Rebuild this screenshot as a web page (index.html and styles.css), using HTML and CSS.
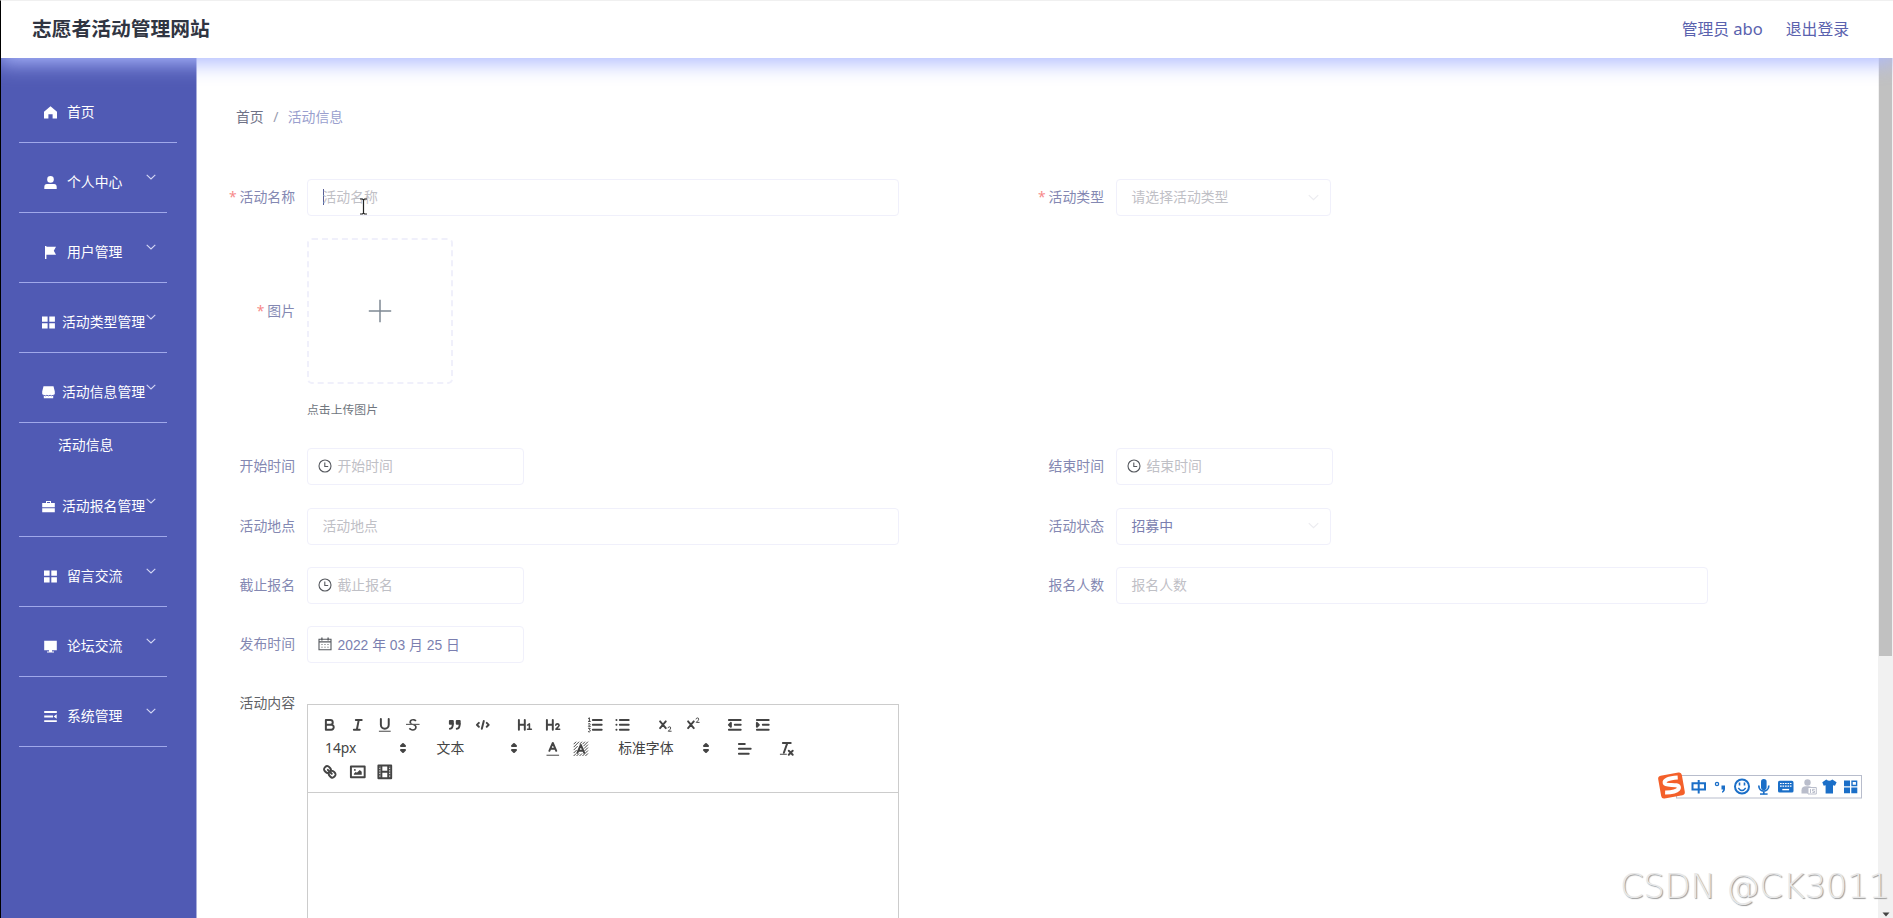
FILE: index.html
```html
<!DOCTYPE html>
<html lang="zh-CN">
<head>
<meta charset="utf-8">
<title>志愿者活动管理网站</title>
<link rel="stylesheet" href="styles.css">
</head>
<body>
<svg class="defs" aria-hidden="true">
  <symbol id="chev" viewBox="0 0 10 6"><path d="M.7.8 5 5 9.300.8" fill="none" stroke="currentColor" stroke-width="1.1"/></symbol>
  <symbol id="grid" viewBox="0 0 13 13"><path d="M0 .5h5.600v5.200H0zM7.300.5h5.600v5.200H7.300zM0 7.300h5.600v5.200H0zM7.300 7.300h5.600v5.200H7.300z" fill="currentColor"/></symbol>
  <symbol id="clock" viewBox="0 0 14 14"><g fill="none" stroke="currentColor" stroke-width="1.1"><circle cx="7" cy="7" r="6"/><path d="M6.800 3.500v4h3.400"/></g></symbol>
  <symbol id="updown" viewBox="0 0 18 18"><path d="M7 11 9 13 11 11ZM7 7 9 5 11 7Z" fill="#444" stroke="#444" stroke-width="2" stroke-linejoin="round"/></symbol>
</svg>
<div class="app">
  <header class="header">
    <h1 class="title">志愿者活动管理网站</h1>
    <div class="user"><span>管理员 <span class="name">abo</span></span><span>退出登录</span></div>
  </header>
  <div class="body">
    <nav class="side">
      <div class="item home"><svg class="mi" viewBox="0 0 13 13"><path d="M6.500.3 13 5.800V12.500H8.600V8.300H4.400v4.200H0V5.800z" fill="currentColor"/></svg><span>首页</span></div>
      <div class="item"><svg class="mi" viewBox="0 0 13 13"><circle cx="6.500" cy="3.400" r="3.300" fill="currentColor"/><path d="M.3 13V11Q.3 8 3 8h7q2.700 0 2.700 3v2z" fill="currentColor"/></svg><span>个人中心</span><svg class="chev"><use href="#chev"/></svg></div>
      <div class="item"><svg class="mi" viewBox="0 0 13 13"><path d="M1 0h1.400v.8H12L9.800 4.800 12 8.800H2.400V13H1z" fill="currentColor"/></svg><span>用户管理</span><svg class="chev"><use href="#chev"/></svg></div>
      <div class="item long"><svg class="mi"><use href="#grid"/></svg><span>活动类型管理</span><svg class="chev"><use href="#chev"/></svg></div>
      <div class="item long"><svg class="mi" viewBox="0 0 13 13"><path d="M1.500.3h10L12.800 5.500v2.300q0 1-1.600 1.200v3.300H1.800V9Q.2 8.800.2 7.800V5.500z" fill="currentColor"/><path d="M1.800 9.300q1.600 1 3.100 0 1.600 1 3.200 0 1.500 1 3.100 0" fill="none" stroke="#505ab4" stroke-width=".9"/></svg><span>活动信息管理</span><svg class="chev"><use href="#chev"/></svg></div>
      <div class="sub">活动信息</div>
      <div class="item long"><svg class="mi" viewBox="0 0 13 13"><path d="M4 3V1h5v2h3.800v4.300H.2V3zM5 3h3V2H5zM.2 8.300h12.600v4H.2z" fill="currentColor" fill-rule="evenodd"/></svg><span>活动报名管理</span><svg class="chev"><use href="#chev"/></svg></div>
      <div class="item"><svg class="mi"><use href="#grid"/></svg><span>留言交流</span><svg class="chev"><use href="#chev"/></svg></div>
      <div class="item"><svg class="mi" viewBox="0 0 13 13"><path d="M.2.800h12.600v9.400H.2zM5 10.200h3v1.200h2v1H3v-1h2z" fill="currentColor"/></svg><span>论坛交流</span><svg class="chev"><use href="#chev"/></svg></div>
      <div class="item"><svg class="mi" viewBox="0 0 13 13"><path d="M.2 1h12.600v1.900H.2zM.2 5.600h8.800v1.900H.2zM.2 10.200h12.600v1.900H.2zM12.700 4.300v4.500L9.600 6.500z" fill="currentColor"/></svg><span>系统管理</span><svg class="chev"><use href="#chev"/></svg></div>
    </nav>
    <main class="main">
      <div class="crumb"><span class="c1">首页</span><span class="sep">/</span><span class="c2">活动信息</span></div>
      <div class="form">
        <div class="row">
          <div class="field"><label class="req">活动名称</label><div class="input wide"><i class="caret"></i><span class="ph">活动名称</span></div></div>
          <div class="field"><label class="req">活动类型</label><div class="input select"><span class="ph">请选择活动类型</span><svg class="sel"><use href="#chev"/></svg></div></div>
        </div>
        <div class="row">
          <div class="field up"><label class="req uplabel">图片</label><div><div class="upload"><svg viewBox="0 0 24 24"><path d="M12 .8v22.400M.8 12h22.400" stroke="#7f8994" stroke-width="1.500"/></svg></div><div class="tip">点击上传图片</div></div></div>
        </div>
        <div class="row">
          <div class="field"><label>开始时间</label><div class="input date"><svg class="ic"><use href="#clock"/></svg><span class="ph">开始时间</span></div></div>
          <div class="field"><label>结束时间</label><div class="input date"><svg class="ic"><use href="#clock"/></svg><span class="ph">结束时间</span></div></div>
        </div>
        <div class="row">
          <div class="field"><label>活动地点</label><div class="input wide"><span class="ph">活动地点</span></div></div>
          <div class="field"><label>活动状态</label><div class="input select"><span class="val">招募中</span><svg class="sel"><use href="#chev"/></svg></div></div>
        </div>
        <div class="row">
          <div class="field"><label>截止报名</label><div class="input date"><svg class="ic"><use href="#clock"/></svg><span class="ph">截止报名</span></div></div>
          <div class="field"><label>报名人数</label><div class="input wide"><span class="ph">报名人数</span></div></div>
        </div>
        <div class="row">
          <div class="field"><label>发布时间</label><div class="input date"><svg class="ic" viewBox="0 0 14 14"><g fill="none" stroke="currentColor"><path d="M1 2.300h12v10.500H1zM1 4.900h12" stroke-width="1.100"/><path d="M3.900.6v2.800M10.100.6v2.800" stroke-width="1.300"/><path d="M3.200 7.500h7.800M3.200 10.200h7.800" stroke-dasharray="1.600 1.400" stroke-opacity=".6"/></g></svg><span class="val day">2022 年 03 月 25 日</span></div></div>
        </div>
        <div class="row">
          <div class="field ed"><label class="dark">活动内容</label>
            <div class="editor">
              <div class="tools">
                <div class="line">
                  <div class="group">
                    <svg viewBox="0 0 18 18"><path class="s" d="M5 4H9.500A2.500 2.500 0 0 1 12 6.500 2.500 2.500 0 0 1 9.500 9H5ZM5 9H10.500A2.500 2.500 0 0 1 13 11.500 2.500 2.500 0 0 1 10.500 14H5Z"/></svg>
                    <svg viewBox="0 0 18 18"><path class="s" d="M7 4H13M5 14H11M8 14 10 4"/></svg>
                    <svg viewBox="0 0 18 18"><path class="s" d="M5 3V9A4 4 0 0 0 9 13 4 4 0 0 0 13 9V3"/><rect class="f" x="3" y="15" width="12" height="1"/></svg>
                    <svg viewBox="0 0 18 18"><path class="s t" d="M2.500 8.500H15.500"/><path class="f" d="M6.500 8C6 7.800 5.500 7.200 5.500 6.300 5.500 4.200 7.300 3 9.300 3c1.700 0 3 .6 3.500 1.500l-1.400 1C10.900 4.900 10.200 4.600 9.300 4.600 8 4.600 7.200 5.200 7.200 6.200 7.200 7.100 8 7.600 9 8zM11.500 9c.9.5 1.500 1.300 1.500 2.400C13 13.700 11.200 15 9 15c-1.900 0-3.500-.8-4.100-1.900l1.300-1.100c.6.800 1.600 1.400 2.800 1.400 1.400 0 2.300-.7 2.300-1.900 0-1.300-1.200-1.900-3-2.500z"/></svg>
                  </div>
                  <div class="group">
                    <svg viewBox="0 0 18 18"><path class="f s" d="M4 5H7V8H4ZM11 5H14V8H11Z"/><path class="s" d="M7 8C7 12 6 13 4 13M14 8C14 12 13 13 11 13"/></svg>
                    <svg viewBox="0 0 18 18"><path class="s" d="M5 7 3 9 5 11M13 7 15 9 13 11M10 5 8 13"/></svg>
                  </div>
                  <div class="group">
                    <svg viewBox="0 0 18 18"><path class="s" d="M3 4V14M9 4V14M3 9H9"/><path class="s thin" d="M11.800 9.200 13.700 8v5.500M11.800 13.500H15.700"/></svg>
                    <svg viewBox="0 0 18 18"><path class="s" d="M3 4V14M9 4V14M3 9H9"/><path class="s thin" d="M12 9.300Q12.200 8 13.700 8T15.400 9.500Q15.400 10.500 12.200 13.400H16"/></svg>
                  </div>
                  <div class="group">
                    <svg viewBox="0 0 18 18"><path class="s" d="M7 4H16M7 9H16M7 14H16"/><path class="s t" d="M2.500 5.500H4.500M3.500 5.500V1.800L2.500 2.500M2.500 8Q4.500 7 4.300 8.500L2.500 10.500H4.500M2.500 12.500H4.300L3.500 14Q4.800 14.200 4.300 15.500T2.400 16"/></svg>
                    <svg viewBox="0 0 18 18"><path class="s" d="M6 4H15M6 9H15M6 14H15"/><path class="s" d="M2.500 4h.1M2.500 9h.1M2.500 14h.1"/></svg>
                  </div>
                  <div class="group">
                    <svg viewBox="0 0 18 18"><path class="s" d="M4.200 5.500 10 12.300M10 5.500 4.200 12.300"/><path class="s t" d="M12.300 12Q12.500 11 13.800 11T15 12.300Q15 13.200 12.500 15.500H15.500"/></svg>
                    <svg viewBox="0 0 18 18"><path class="s" d="M4.200 5.500 10 12.300M10 5.500 4.200 12.300"/><path class="s t" d="M12.300 3Q12.500 2 13.800 2T15 3.300Q15 4.200 12.500 6.500H15.500"/></svg>
                  </div>
                  <div class="group">
                    <svg viewBox="0 0 18 18"><path class="s" d="M3 14H15M3 4H15M9 9H15"/><path class="f s" d="M5 7V11L3 9Z"/></svg>
                    <svg viewBox="0 0 18 18"><path class="s" d="M3 14H15M3 4H15M9 9H15"/><path class="f s" d="M3 7V11L5 9Z"/></svg>
                  </div>
                </div>
                <div class="line">
                  <div class="group"><div class="pick"><span>14px</span><svg><use href="#updown"/></svg></div></div>
                  <div class="group"><div class="pick"><span>文本</span><svg><use href="#updown"/></svg></div></div>
                  <div class="group">
                    <svg viewBox="0 0 18 18"><path class="s" d="M5.500 11 9 3 12.500 11M11.600 9H6.400" stroke-linejoin="miter"/><path class="s t" d="M3 15.500H15"/></svg>
                    <svg viewBox="0 0 18 18"><path class="s t" d="M2 4 4 2M2 7 7 2M2 10 5.500 6.500M2 13 4.500 10.500M2 16 4 14M10 2 8 4M13 2 11 4M16 2 12 6M16 5 12.500 8.500M16 8 13 11M16 11 13.500 13.500M16 14 14 16M5 16 7 14M8 16 10 14M11 16 13 14"/><path class="s" d="M5.500 13 9 5 12.500 13M11.600 11H6.400"/></svg>
                  </div>
                  <div class="group"><div class="pick font"><span>标准字体</span><svg><use href="#updown"/></svg></div></div>
                  <div class="group"><svg viewBox="0 0 18 18"><path class="s" d="M3 9H15M3 14H13M3 4H9"/></svg></div>
                  <div class="group"><svg viewBox="0 0 18 18"><path class="s" d="M5 3H13M6 13 9.600 3M11 11 15 15M15 11 11 15"/><rect class="f" x="2" y="14" width="7" height="1"/></svg></div>
                </div>
                <div class="line">
                  <div class="group">
                    <svg viewBox="0 0 18 18"><path class="s" d="M7 7 11 11"/><path class="s" d="M8.900 4.577a3.476 3.476 0 0 1 .36 4.679A3.476 3.476 0 0 1 4.577 8.900C3.185 7.500 2.035 6.400 4.217 4.217S7.500 3.185 8.900 4.577ZM13.423 9.100a3.476 3.476 0 0 0-4.679-.36 3.476 3.476 0 0 0 .36 4.679c1.392 1.392 2.500 2.542 4.679.36s1.032-3.283-.36-4.679Z"/></svg>
                    <svg viewBox="0 0 18 18"><rect class="s" x="2" y="3.500" width="14" height="11" stroke-linejoin="miter"/><circle class="f" cx="6" cy="7" r="1"/><path class="f" d="M5 12V11L7 9 8 10 11 7 13 9V12Z"/></svg>
                    <svg viewBox="0 0 18 18"><path class="s" d="M2.500 2.500H15.500V15.500H2.500ZM5.500 3V15M12.500 3V15M6 9H12" stroke-linejoin="miter"/><path d="M3.900 3.500V15M14.100 3.500V15" stroke="#444" stroke-width="1.400" stroke-dasharray="1.300 1.300"/></svg>
                  </div>
                </div>
              </div>
              <div class="area"></div>
            </div>
          </div>
        </div>
      </div>
    </main>
    <div class="scroll"><div class="thumb"></div><svg viewBox="0 0 8 5"><path d="M.5.5h7L4 4.500z" fill="#444"/></svg></div>
  </div>
</div>
<svg class="ibeam" viewBox="0 0 9 17"><path d="M1 1h2.500l1 1 1-1H8M1 16h2.500l1-1 1 1H8M4.500 2v13" fill="none" stroke="#222" stroke-width="1.200"/></svg>
<div class="ime">
  <svg viewBox="0 0 210 30">
    <rect x="19.500" y="5.500" width="185" height="22.500" fill="#fff" stroke="#b8bdcc"/>
    <g transform="rotate(-10 14.500 15.500)"><rect x="2.500" y="4" width="24" height="23" rx="3" fill="#f4602a"/><path d="M22 8.800Q8 7.300 8.200 12c.2 3.500 13.500 2.300 13.300 6.600C21.300 22.700 12 22.200 7 21.200" fill="none" stroke="#fff" stroke-width="4"/></g>
    <g fill="none" stroke="#1b6fc8" stroke-width="2"><path d="M35.500 13.300h12.500v6.200H35.500zM41.700 10v13.500"/><circle cx="60" cy="14" r="1.600" stroke-width="1.300"/><circle cx="85" cy="16.500" r="7"/><path d="M81.300 18q3.700 5 7.400 0" stroke-width="1.400"/><path d="M82.500 12.500v3M87.500 12.500v3" stroke-width="1.600"/><path d="M101.800 15.500c0 7.500 10 7.500 10 0M106.800 20.500v3.700" stroke-width="1.700"/></g>
    <g fill="#1b6fc8"><path d="M64.500 15.500h3.500v3.200q0 3-3 4v-1.300q1.200-.9 1.200-2h-1.700z"/><rect x="104" y="9" width="5.600" height="11" rx="2.800"/><path d="M103 23.300h7.600v1.500H103z"/><rect x="121" y="10.800" width="15.500" height="11.700" rx="1.600"/><path d="M165.300 12.200l4-2.700q3 2.600 6 0l4.300 2.700-1.600 3.600-2-.6v8.200h-7.400v-8.200l-1.900.6z"/><path d="M187 10.500h6v5.700h-6zM187 17.500h6v5.700h-6zM194.300 17.500h6v5.700h-6z"/></g>
    <path d="M195 11.200h4.600v4.300H195z" fill="none" stroke="#1b6fc8" stroke-width="1.400"/>
    <path d="M123 13.500h11.500M123 16.200h11.500" stroke="#fff" stroke-width="1.200" stroke-dasharray="1.700 .8"/><path d="M125.300 19.600h6.800" stroke="#fff" stroke-width="1.400"/>
    <g fill="#b9bdcb"><circle cx="150.500" cy="12.500" r="3.200"/><path d="M144.500 23.500v-3.300q0-4 4.500-4h3q3 0 4 2.500v4.800z"/></g>
    <path d="M151 17.500h8.300v6.500H151zM153.500 19v4M155.500 22.500h2v-1.500h-2v-1.700h2.300" fill="#fff" stroke="#b9bdcb"/>
  </svg>
</div>
<div class="mark">CSDN @CK3011</div>
</body>
</html>
```
FILE: styles.css
```css
* { box-sizing: border-box; }
body {
  margin: 0;
  height: 918px;
  overflow: hidden;
  position: relative;
  background: #fff;
  font-family: "Noto Sans", "Noto Sans CJK SC", sans-serif;
  font-size: 13.85px;
  line-height: 20px;
  white-space: nowrap;
}
svg { display: block; flex: none; }
.defs { display: none; }
.app {
  height: 918px;
  display: flex;
  flex-direction: column;
  border-top: 1px solid #f0f0f0;
  border-left: 1px solid #000;
}
.header {
  height: 57px;
  flex: none;
  display: flex;
  align-items: center;
  justify-content: space-between;
  padding: 0 44px 2px 31px;
  background: #fff;
  box-shadow: 0 2px 20px 3px #adb9ff;
  clip-path: inset(0 0 -40px 0);
  position: relative;
  z-index: 2;
}
.title { margin: 0; padding-top: 1px; font-size: 19.75px; font-weight: 700; color: #303542; line-height: 28px; }
.user { display: flex; gap: 23px; font-size: 15.8px; color: #5a62ae; }
.name { font-size: 16.600px; }
.body { flex: 1; min-height: 0; display: flex; }

.side {
  width: 196px;
  flex: none;
  background: #505ab4;
  border-right: 1px solid #a9aedb;
  padding: 15px 0 0 18px;
  color: #fff;
}
.item {
  position: relative;
  width: 148px;
  height: 70px;
  border-bottom: 1px solid #a0a8ea;
  padding: 9px 0 0 25px;
  display: flex;
  align-items: center;
  gap: 10px;
}
.item.home { width: 158px; }
.item.long { padding-left: 22.500px; gap: 7.500px; }
.mi { width: 13px; height: 13px; }
.chev { position: absolute; left: 127px; top: 31px; width: 10px; height: 6px; color: #d5d8f5; }
.sub { height: 44px; line-height: 44px; padding-left: 39px; }

.main { flex: 1; min-width: 0; overflow: hidden; padding: 49px 0 0 27px; }
.crumb { display: flex; height: 20px; margin-left: 12px; }
.c1 { color: #6f7287; }
.sep { width: 24px; text-align: center; color: #999cb0; }
.c2 { color: #9a9fce; }
.form { padding-top: 52px; display: flex; flex-direction: column; gap: 22px; }
.row { display: grid; grid-template-columns: 809px 1fr; }
.field { display: flex; align-items: center; gap: 12px; height: 37.300px; }
.field label { width: 71px; text-align: right; color: #8488b2; padding-bottom: 1px; }
.field label.dark { color: #606266; }
.req::before { content: "*"; color: #f78989; margin-right: 3px; }
.input {
  height: 37px;
  border: 1px solid #f0f0fb;
  border-radius: 4px;
  display: flex;
  align-items: center;
  padding: 0 10px 1px 14.500px;
  position: relative;
}
.wide { width: 592px; }
.select { width: 215px; justify-content: space-between; }
.date { width: 217px; padding-left: 9.500px; gap: 6px; }
.ph { color: #bfc0c6; }
.val { color: #7b7fb0; padding-top: 1px; }
.day { font-family: "Liberation Sans", "Noto Sans CJK SC", sans-serif; font-size: 13.850px; padding-top: 2px; }
.ic { width: 14px; height: 14px; color: #55585e; }
.sel { width: 11px; height: 7px; color: #ececf0; margin-right: 1px; }
.caret { width: 1px; height: 16px; margin-right: -1px; background: #5b5f96; }
.field.up { height: 188px; align-items: flex-start; }
.uplabel { margin-top: 63px; }
.upload {
  width: 146px;
  height: 146px;
  border: 2px dashed #f0f0fb;
  border-radius: 5px;
  display: flex;
  align-items: center;
  justify-content: center;
}
.upload svg { width: 24px; height: 24px; }
.tip { font-size: 11.850px; color: #70767e; margin-top: 15px; }
.field.ed { height: 260px; align-items: flex-start; }
.ed label { margin-top: 8px; }
.editor { width: 592px; margin-top: 19px; border: 1px solid #ccc; color: #444; }
.tools { padding: 7.500px 8px; border-bottom: 1px solid #ccc; }
.line { display: flex; height: 23.700px; gap: 14.800px; }
.group { display: flex; align-items: center; }
.group > svg { width: 27.600px; height: 17.700px; }
.pick { width: 96.800px; display: flex; align-items: center; justify-content: space-between; padding: 0 1px 1px 9px; }
.pick.font { width: 106.700px; }
.pick svg { width: 18px; height: 18px; }
.s { fill: none; stroke: #444; stroke-width: 2; stroke-linecap: round; stroke-linejoin: round; }
.s.t { stroke-width: 1; }
.s.thin { stroke-width: 1.600; }
.f, .f.s { fill: #444; }
.area { height: 200px; }

.scroll { width: 15px; flex: none; background: #f1f1f1; display: flex; flex-direction: column; align-items: center; }
.thumb { width: 13px; height: 598px; background: #c1c1c1; }
.scroll > svg { width: 8px; height: 5px; margin-top: auto; margin-bottom: 1px; }

.ibeam { position: absolute; left: 359px; top: 198px; width: 9px; height: 17px; }
.ime { position: absolute; left: 1657px; top: 770px; }
.ime svg { width: 210px; height: 30px; }
.mark {
  position: absolute;
  left: 1620px;
  top: 863px;
  font-family: "DejaVu Sans", sans-serif;
  font-weight: 200;
  font-size: 34px;
  letter-spacing: -.4px;
  line-height: 46px;
  color: #e8e8e8;
  text-shadow: 1px 1px 1px #999;
}
```
